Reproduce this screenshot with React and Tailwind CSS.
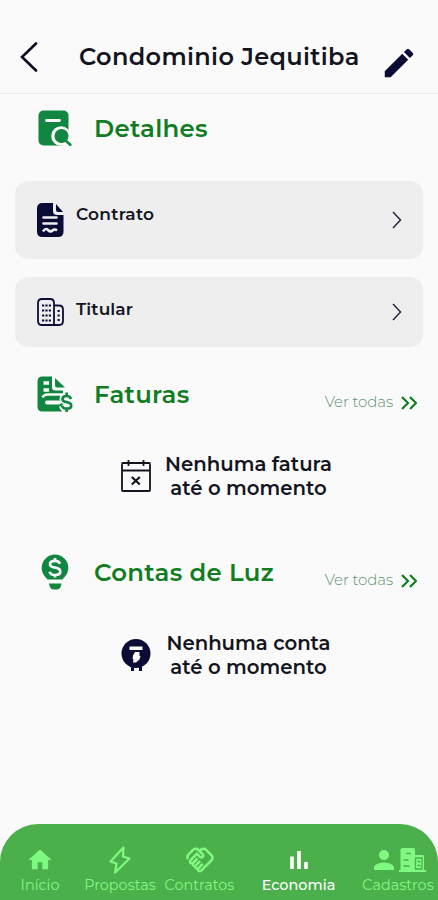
import { MdEdit, MdHome, MdOutlineHandshake, MdPerson } from 'react-icons/md'

const DetailsIcon = () => (
  <svg className="h-9 w-[34px]" viewBox="0 0 34 36" fill="none">
    <rect x="0.5" y="0.5" width="30" height="35" rx="5" fill="#118641" />
    <path d="M8.5 10.5h13" stroke="#fafafa" strokeWidth="2.8" strokeLinecap="round" />
    <circle cx="23" cy="26" r="9.8" fill="#fafafa" />
    <path d="M25 36V30h9v6z" fill="#fafafa" />
    <circle cx="23.5" cy="26" r="7" fill="#118641" />
    <path d="M27.5 30.5l4.8 4.3" stroke="#118641" strokeWidth="2.6" strokeLinecap="round" />
  </svg>
)

const InvoiceIcon = () => (
  <svg className="h-9 w-9" viewBox="0 0 36 36" fill="none">
    <path d="M5.5 0.500H15V11q0 3.500 3.500 3.500H26V20l-3 2 4 6-4 3 2 4.500H5.500q-5 0-5-5v-25q0-5 5-5z" fill="#118641" />
    <path d="M18 2l10 9.500h-7.500q-2.500 0-2.500-2.500z" fill="#118641" />
    <path d="M6.500 7h5.500M6.500 14h5.500" stroke="#fafafa" strokeWidth="3.600" />
    <path d="M26 18.500H10.500q-3.500 0-5 3" stroke="#fafafa" strokeWidth="2.400" />
    <path d="M10 26.500h12" stroke="#fafafa" strokeWidth="4" strokeLinecap="round" />
    <path d="M34 23q-1-3-4.300-3-4.200 0-4.200 3 0 2.500 4.200 3.200 4.500.8 4.500 3.500 0 3-4.500 3-4 0-4.700-3M29.700 16.500v3.500M29.700 32.500v3.500" stroke="#fafafa" strokeWidth="6" />
    <path d="M34 23q-1-3-4.300-3-4.200 0-4.200 3 0 2.500 4.200 3.200 4.500.8 4.500 3.500 0 3-4.500 3-4 0-4.700-3M29.700 16.500v3.500M29.700 32.500v3.500" stroke="#118641" strokeWidth="2.700" />
  </svg>
)

const BulbIcon = () => (
  <svg className="h-9 w-7" viewBox="0 0 28 36" fill="none">
    <path d="M14 0.500a13.300 13.300 0 0 1 13.300 13.300c0 5-2.500 8.300-6 11.700H6.700C3.200 22.100.7 18.800.7 13.800A13.300 13.300 0 0 1 14 .5z" fill="#118641" />
    <path d="M8 29.500h12.500q-.5 6-5 6H13q-4.500 0-5-6z" fill="#118641" />
    <path d="M19 9.800q-1-3-5-3-5 0-5 3.300 0 3 5 3.600 5.300.7 5.300 3.800 0 3.500-5.300 3.500-4.500 0-5.300-3.300M14 4v3M14 20.500v3" stroke="#fafafa" strokeWidth="2.700" />
  </svg>
)

const ContractIcon = () => (
  <svg className="h-[34px] w-7" viewBox="0 0 28 34" fill="none">
    <path d="M5.500 0H16v8q0 4 4 4h6.500v16.500q0 5.500-5.500 5.500H5.500Q0 34 0 28.500v-23Q0 0 5.500 0z" fill="#0b0c35" />
    <path d="M19 1l7 8h-5q-2 0-2-2z" fill="#0b0c35" />
    <path d="M6.500 14.500h13M6.500 20.500h13" stroke="#eee" strokeWidth="2.600" strokeLinecap="round" />
    <path d="M6 28.500q2.500-4 5-1.500t4.500.5q2-2 4.500 0" stroke="#eee" strokeWidth="2.600" />
  </svg>
)

const HolderIcon = () => (
  <svg className="h-7 w-7" viewBox="0 0 28 28" fill="none" stroke="#0b0c35" strokeWidth="1.800">
    <path d="M17 27H5q-4 0-4-4V5q0-4 4-4h8q4 0 4 4zM17 7.500h5q4 0 4 4V23q0 4-4 4h-5" />
    <path d="M5 7.500h9M5 12.500h9M5 17.500h9M5 22.500h9" strokeWidth="2.200" strokeDasharray="2.200 1.200" />
    <path d="M20.500 13h2.200M20.500 17.500h2.200M20.500 22h2.200" />
  </svg>
)

const CalendarXIcon = () => (
  <svg className="h-8 w-[30px]" viewBox="0 0 30 32" fill="none" stroke="#141421" strokeWidth="1.800">
    <rect x="1" y="3" width="28" height="28" rx="1" />
    <path d="M1 10.500h28M7.500 0v6M22.500 0v6" />
    <path d="M10.800 17l8 7.500M18.800 17l-8 7.500" strokeWidth="2.200" />
  </svg>
)

const MeterIcon = () => (
  <svg className="h-[34px] w-[30px]" viewBox="0 0 30 34" fill="none">
    <circle cx="15" cy="15.500" r="14.500" fill="#0b0c35" />
    <path d="M10 27h3v6h-3zM18 27h3v6h-3z" fill="#0b0c35" />
    <path d="M8.500 8.500h13v3.500h-13z" fill="#fafafa" />
    <path d="M14 14h4.500v4h1l-1 3.500-3.500 3h-3l.5-3.500h-1l.5-3.500z" fill="#fafafa" />
  </svg>
)

const BoltIcon = () => (
  <svg className="h-7 w-[22px]" viewBox="0 0 22 28" fill="none" stroke="currentColor" strokeWidth="2.200" strokeLinejoin="round">
    <path d="M14.500 1.500L1.500 15.500l6 2L6 26.500l14.500-14-6.500-2z" />
  </svg>
)

const BarsIcon = () => (
  <svg className="h-[18px] w-[18px]" viewBox="0 0 18 18" fill="none" stroke="currentColor" strokeWidth="3.600">
    <path d="M2 5.500V18M9 0v18M16 11v7" />
  </svg>
)

const BuildingIcon = () => (
  <svg className="h-6 w-7" viewBox="0 0 28 24" fill="none">
    <path d="M3 0h11.500q1.500 0 1.500 1.500V7h7.500q1.500 0 1.500 1.500V22h2v2H0v-2h1.500V1.500Q1.500 0 3 0z" fill="currentColor" />
    <path d="M7 5.500h5M4.500 12h5M4.500 18h6M16.500 10h6.500v11h-6.500zM18.500 13.500h3M18.500 17.500h3" stroke="#4baf4b" strokeWidth="1.300" />
  </svg>
)

const Chevron = () => (
  <svg className="h-[18px] w-2.5" viewBox="0 0 10 18" fill="none" stroke="#252545" strokeWidth="1.500">
    <path d="M1 1l7.500 8L1 17" />
  </svg>
)

function SectionHeader({ icon, title, link }) {
  return (
    <div className="flex h-9 items-center">
      <div className="flex w-[110px] shrink-0 justify-center">{icon}</div>
      <h2 className="-ml-4 flex-1 whitespace-nowrap text-[24.4px] font-semibold leading-9 tracking-[0.3px] text-[#117d22]">
        {title}
      </h2>
      {link && (
        <a className="mr-[21px] mt-[17px] flex items-center gap-2 text-[15px] font-light text-[#5c9272]">
          <span className="whitespace-nowrap tracking-[-0.1px]">Ver todas</span>
          <svg className="h-3.5 w-4" viewBox="0 0 16 14" fill="none" stroke="#117d22" strokeWidth="2.200">
            <path d="M1 1l6 6-6 6M9 1l6 6-6 6" />
          </svg>
        </a>
      )}
    </div>
  )
}

function EmptyState({ icon, subject }) {
  return (
    <div className="flex items-center pl-[121px]">
      {icon}
      <p className="ml-[7px] w-[181px] whitespace-nowrap text-center text-[19.7px] font-semibold leading-6 text-[#141421]">
        {subject}
        <br />
        até o momento
      </p>
    </div>
  )
}

function NavItem({ icon, label, width, active }) {
  return (
    <div className={`flex flex-col items-center ${width} ${active ? 'font-medium text-white' : 'text-[#80f981]'}`}>
      <div className="flex h-7 items-center">{icon}</div>
      <span className="mt-px whitespace-nowrap text-[14.4px] leading-5">{label}</span>
    </div>
  )
}

export default function App() {
  return (
    <div className="flex h-[900px] w-[438px] flex-col overflow-hidden bg-[#fafafa] font-['Montserrat','Inter',sans-serif]">
      <header className="flex h-[94px] shrink-0 items-center border-b border-[#ececed] pl-5 pr-[22px] pt-5">
        <svg className="h-[30px] w-[18px]" viewBox="0 0 18 30" fill="none" stroke="#0b0c22" strokeWidth="2.600">
          <path d="M16 1.500L2 15l14 13.500" strokeLinecap="round" />
        </svg>
        <h1 className="ml-[41px] flex-1 whitespace-nowrap text-[24px] font-semibold tracking-[0.35px] text-[#141421]">
          Condominio Jequitiba
        </h1>
        <MdEdit className="-mr-0.5 mt-3 size-[38px] text-[#0b0c35]" />
      </header>

      <main className="flex flex-1 flex-col pt-4">
        <SectionHeader icon={<DetailsIcon />} title="Detalhes" />

        <div className="mx-[15px] mt-[35px] flex h-[78px] items-center rounded-[13px] bg-[#eee] pl-[22px] pr-[21px]">
          <ContractIcon />
          <span className="-mt-2.5 ml-[11px] flex-1 text-[17px] font-semibold tracking-[0.25px] text-[#141421]">Contrato</span>
          <Chevron />
        </div>
        <div className="mx-[15px] mt-[18px] flex h-[70px] items-center rounded-[13px] bg-[#eee] pl-[22px] pr-[21px]">
          <HolderIcon />
          <span className="-mt-1 ml-[11px] flex-1 text-[17px] font-semibold tracking-[0.1px] text-[#141421]">Titular</span>
          <Chevron />
        </div>

        <div className="mt-[29px]">
          <SectionHeader icon={<InvoiceIcon />} title="Faturas" link />
        </div>
        <div className="mt-10">
          <EmptyState icon={<CalendarXIcon />} subject="Nenhuma fatura" />
        </div>

        <div className="mt-[54px]">
          <SectionHeader icon={<BulbIcon />} title="Contas de Luz" link />
        </div>
        <div className="mt-[41px]">
          <EmptyState icon={<MeterIcon />} subject="Nenhuma conta" />
        </div>
      </main>

      <nav className="flex h-[76px] shrink-0 rounded-t-[38px] bg-[#4baf4b] pt-[22px]">
        <NavItem icon={<MdHome className="size-[28px]" />} label="Início" width="w-[80px]" />
        <NavItem icon={<BoltIcon />} label="Propostas" width="w-[80px]" />
        <NavItem icon={<MdOutlineHandshake className="size-[30px]" />} label="Contratos" width="w-[79px]" />
        <NavItem icon={<BarsIcon />} label="Economia" width="w-[119px]" active />
        <NavItem icon={<><MdPerson className="size-[30px]" /><BuildingIcon /></>} label="Cadastros" width="w-[80px]" />
      </nav>
    </div>
  )
}
